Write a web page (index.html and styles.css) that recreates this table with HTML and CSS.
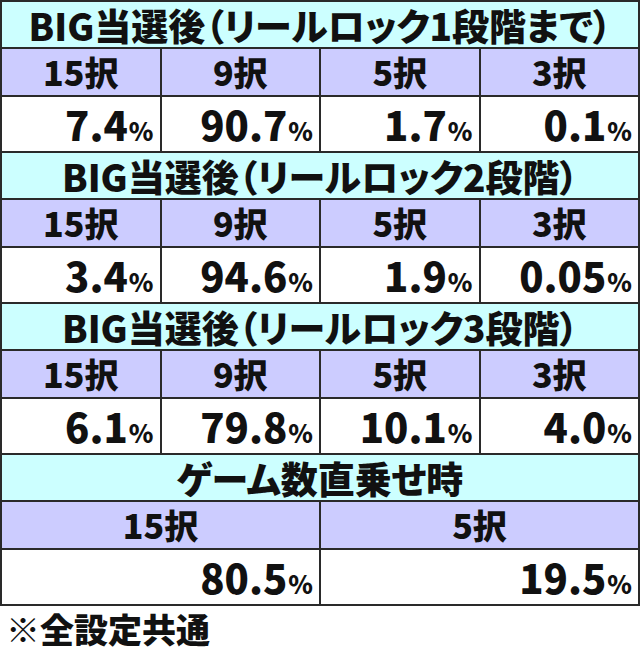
FILE: index.html
```html
<!DOCTYPE html>
<html lang="ja">
<head>
<meta charset="utf-8">
<link rel="stylesheet" href="styles.css">
</head>
<body>
<div class="sheet">
  <div class="title">BIG当選後（リールロック1段階まで）</div>
  <div class="hd">15択</div>
  <div class="hd">9択</div>
  <div class="hd">5択</div>
  <div class="hd">3択</div>
  <div class="val">7.4<span class="pct">%</span></div>
  <div class="val">90.7<span class="pct">%</span></div>
  <div class="val">1.7<span class="pct">%</span></div>
  <div class="val">0.1<span class="pct">%</span></div>

  <div class="title">BIG当選後（リールロック2段階）</div>
  <div class="hd">15択</div>
  <div class="hd">9択</div>
  <div class="hd">5択</div>
  <div class="hd">3択</div>
  <div class="val">3.4<span class="pct">%</span></div>
  <div class="val">94.6<span class="pct">%</span></div>
  <div class="val">1.9<span class="pct">%</span></div>
  <div class="val">0.05<span class="pct">%</span></div>

  <div class="title">BIG当選後（リールロック3段階）</div>
  <div class="hd">15択</div>
  <div class="hd">9択</div>
  <div class="hd">5択</div>
  <div class="hd">3択</div>
  <div class="val">6.1<span class="pct">%</span></div>
  <div class="val">79.8<span class="pct">%</span></div>
  <div class="val">10.1<span class="pct">%</span></div>
  <div class="val">4.0<span class="pct">%</span></div>

  <div class="title">ゲーム数直乗せ時</div>
  <div class="hd half">15択</div>
  <div class="hd half">5択</div>
  <div class="val half">80.5<span class="pct">%</span></div>
  <div class="val half">19.5<span class="pct">%</span></div>
</div>
<p class="note">※全設定共通</p>
</body>
</html>
```

FILE: styles.css
```css
html, body {
  margin: 0;
  padding: 0;
  background: #ffffff;
}

body {
  width: 640px;
  height: 652px;
  overflow: hidden;
  font-family: "Noto Sans CJK JP", "Noto Sans", sans-serif;
  font-weight: 900;
  color: #111111;
}

.sheet {
  display: grid;
  grid-template-columns: repeat(4, 1fr);
  grid-template-rows: repeat(4, 45px 46px 54px);
  gap: 2px;
  padding: 2px;
  background: #2a2a2a;
  width: 640px;
  box-sizing: border-box;
}

.title {
  grid-column: 1 / -1;
  background: #ccffff;
  display: flex;
  align-items: center;
  justify-content: center;
  font-size: 37px;
  line-height: 44px;
  font-feature-settings: "palt";
}

.hd {
  background: #ccccff;
  display: flex;
  align-items: center;
  justify-content: center;
  font-size: 34px;
  line-height: 44px;
}

.val {
  background: #ffffff;
  display: flex;
  align-items: baseline;
  justify-content: flex-end;
  padding: 2px 6px 0 0;
  font-size: 40px;
  line-height: 50px;
}

.half {
  grid-column: span 2;
}

.pct {
  font-size: 25px;
  margin-left: 1px;
}

.note {
  margin: 0;
  padding: 2px 0 0 6px;
  font-size: 34px;
  line-height: 42px;
}
```
